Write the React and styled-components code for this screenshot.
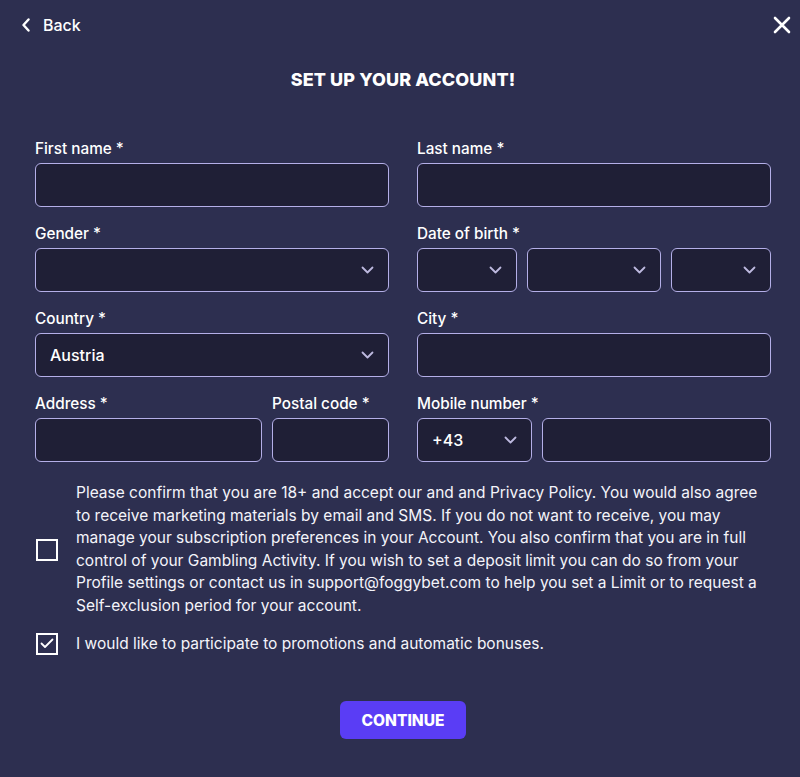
import React from "react";
import styled, { createGlobalStyle } from "styled-components";

const Global = createGlobalStyle`
  html, body { margin: 0; padding: 0; background: #2d2f50; }
  body { font-family: "Inter", "Noto Sans", sans-serif; color: #ffffff; }
  * { box-sizing: border-box; }
`;

const Page = styled.div`
  width: 800px;
  height: 777px;
  background: #2d2f50;
  padding: 0 29px 0 35px;
  display: flex;
  flex-direction: column;
`;

const TopBar = styled.div`
  height: 50px;
  display: flex;
  align-items: center;
  justify-content: space-between;
  margin: 0 -20px 0 -14px;
`;

const BackLink = styled.div`
  display: flex;
  align-items: center;
  gap: 12px;
  font-size: 16px;
  font-weight: 500;
`;

const Title = styled.h1`
  margin: 19px 0 0;
  text-align: center;
  font-size: 18px;
  line-height: 22px;
  font-weight: 800;
  letter-spacing: 0.1px;
`;

const Grid = styled.div`
  display: grid;
  grid-template-columns: 354px 354px;
  column-gap: 28px;
  row-gap: 18px;
  margin-top: 49px;
`;

const Field = styled.div`
  display: flex;
  flex-direction: column;
`;

const Label = styled.label`
  font-size: 15.3px;
  font-weight: 500;
  line-height: 18px;
  margin-bottom: 5px;
`;

const Row = styled.div`
  display: grid;
  grid-template-columns: ${({ cols }) => cols};
  gap: 10px;
`;

const Box = styled.div`
  height: 44px;
  background: #1f1f36;
  border: 1.5px solid #b4afe8;
  border-radius: 6px;
  display: flex;
  align-items: center;
  justify-content: space-between;
  padding: 0 14px;
  font-size: 16px;
  font-weight: 500;
  color: #ffffff;
`;

const Chevron = () => (
  <svg width="13" height="8" viewBox="0 0 13 8" fill="none">
    <path d="M1.5 1.5 L6.5 6.5 L11.5 1.5" stroke="#bdb9df" strokeWidth="1.8" strokeLinecap="round" strokeLinejoin="round" />
  </svg>
);

const Select = ({ value }) => (
  <Box>
    <span>{value}</span>
    <Chevron />
  </Box>
);

const Checks = styled.div`
  display: flex;
  flex-direction: column;
  gap: 15px;
  margin-top: 20px;
`;

const CheckRow = styled.div`
  display: flex;
  align-items: center;
  gap: 18px;
`;

const CheckBox = styled.div`
  flex: none;
  width: 22px;
  height: 22px;
  border: 2px solid #ffffff;
  margin-left: 1px;
  display: flex;
  align-items: center;
  justify-content: center;
`;

const CheckText = styled.p`
  margin: 0;
  font-size: 15.5px;
  line-height: 22.6px;
  color: #f4f4fa;
  white-space: nowrap;
`;

const Continue = styled.button`
  align-self: center;
  margin-top: 46px;
  width: 126px;
  height: 38px;
  border: none;
  border-radius: 6px;
  background: #5a3df5;
  color: #ffffff;
  font-family: inherit;
  font-size: 15.5px;
  font-weight: 800;
`;

const consentLines = [
  "Please confirm that you are 18+ and accept our and and Privacy Policy. You would also agree",
  "to receive marketing materials by email and SMS. If you do not want to receive, you may",
  "manage your subscription preferences in your Account. You also confirm that you are in full",
  "control of your Gambling Activity. If you wish to set a deposit limit you can do so from your",
  "Profile settings or contact us in support@foggybet.com to help you set a Limit or to request a",
  "Self-exclusion period for your account.",
];

export default function App() {
  return (
    <>
      <Global />
      <Page>
        <TopBar>
          <BackLink>
            <svg width="10" height="14" viewBox="0 0 10 14" fill="none">
              <path d="M7.5 1.5 L2.5 7 L7.5 12.5" stroke="#fff" strokeWidth="2.4" strokeLinecap="round" strokeLinejoin="round" />
            </svg>
            Back
          </BackLink>
          <svg width="18" height="18" viewBox="0 0 18 18" fill="none">
            <path d="M2 2 L16 16 M16 2 L2 16" stroke="#fff" strokeWidth="2.6" strokeLinecap="round" />
          </svg>
        </TopBar>
        <Title>SET UP YOUR ACCOUNT!</Title>
        <Grid>
          <Field>
            <Label>First name *</Label>
            <Box />
          </Field>
          <Field>
            <Label>Last name *</Label>
            <Box />
          </Field>
          <Field>
            <Label>Gender *</Label>
            <Select />
          </Field>
          <Field>
            <Label>Date of birth *</Label>
            <Row cols="100px 134px 100px">
              <Select />
              <Select />
              <Select />
            </Row>
          </Field>
          <Field>
            <Label>Country *</Label>
            <Select value="Austria" />
          </Field>
          <Field>
            <Label>City *</Label>
            <Box />
          </Field>
          <Row cols="227px 117px">
            <Field>
              <Label>Address *</Label>
              <Box />
            </Field>
            <Field>
              <Label>Postal code *</Label>
              <Box />
            </Field>
          </Row>
          <Field>
            <Label>Mobile number *</Label>
            <Row cols="115px 229px">
              <Select value="+43" />
              <Box />
            </Row>
          </Field>
        </Grid>
        <Checks>
          <CheckRow>
            <CheckBox />
            <CheckText>
              {consentLines.map((line, i) => (
                <React.Fragment key={i}>
                  {line}
                  {i < consentLines.length - 1 && <br />}
                </React.Fragment>
              ))}
            </CheckText>
          </CheckRow>
          <CheckRow>
            <CheckBox>
              <svg width="14" height="11" viewBox="0 0 14 11" fill="none">
                <path d="M1.5 5.5 L5 9 L12.5 1.5" stroke="#fff" strokeWidth="1.8" strokeLinecap="round" strokeLinejoin="round" />
              </svg>
            </CheckBox>
            <CheckText>I would like to participate to promotions and automatic bonuses.</CheckText>
          </CheckRow>
        </Checks>
        <Continue>CONTINUE</Continue>
      </Page>
    </>
  );
}
